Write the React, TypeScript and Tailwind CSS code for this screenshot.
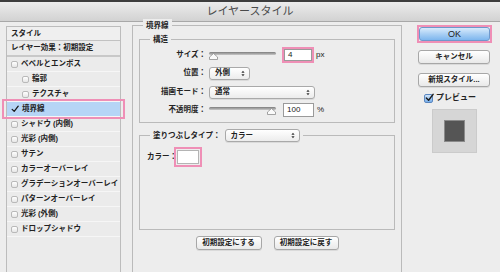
import type { ReactNode } from 'react';

const effects: { label: string; indent?: boolean; checked?: boolean }[] = [
  { label: 'ベベルとエンボス' },
  { label: '輪郭', indent: true },
  { label: 'テクスチャ', indent: true },
  { label: '境界線', checked: true },
  { label: 'シャドウ (内側)' },
  { label: '光彩 (内側)' },
  { label: 'サテン' },
  { label: 'カラーオーバーレイ' },
  { label: 'グラデーションオーバーレイ' },
  { label: 'パターンオーバーレイ' },
  { label: '光彩 (外側)' },
  { label: 'ドロップシャドウ' },
];

function Check({ className }: { className?: string }) {
  return (
    <svg viewBox="0 0 10 10" className={className}>
      <path d="M1.5 5.5 L4 8 L9 1.5" fill="none" stroke="#1a1a1a" strokeWidth="1.6" strokeLinecap="round" strokeLinejoin="round" />
    </svg>
  );
}

function Arrows() {
  return (
    <svg viewBox="0 0 5 8" className="h-[7px] w-[4px]">
      <path d="M2.5 0.5 L4.5 3 H0.5 Z M2.5 7.5 L4.5 5 H0.5 Z" fill="#333" />
    </svg>
  );
}

function Popup({ value, width }: { value: string; width: string }) {
  return (
    <div
      className={`${width} flex h-[13px] items-center justify-between rounded-[3px] border border-[#a9a9a9] bg-gradient-to-b from-white to-[#ececec] pl-[5px] pr-[4px] shadow-[0_1px_0_rgba(0,0,0,0.08)]`}
    >
      <span>{value}</span>
      <Arrows />
    </div>
  );
}

function Slider({ thumb }: { thumb: 'left' | 'right' }) {
  return (
    <div className={`relative flex h-[10px] w-[67px] flex-col ${thumb === 'left' ? 'items-start' : 'items-end'}`}>
      <div className="mt-[2px] h-[3px] w-full rounded-full bg-gradient-to-b from-[#7d7d7d] to-[#c9c9c9]" />
      <svg viewBox="0 0 9 7" className="-mt-[2px] h-[7px] w-[9px]">
        <path d="M4.5 0.5 L8.5 4 V6.5 H0.5 V4 Z" fill="#fafafa" stroke="#8e8e8e" strokeWidth="0.8" />
      </svg>
    </div>
  );
}

function Group({ label, className, children }: { label: ReactNode; className: string; children: ReactNode }) {
  return (
    <div className={`relative border border-[#bababa] ${className}`}>
      <div className="absolute -top-[7px] left-[10px] flex h-[13px] items-center bg-[#ededed] px-[3px]">{label}</div>
      {children}
    </div>
  );
}

function MacButton({ children, width }: { children: ReactNode; width: string }) {
  return (
    <div
      className={`${width} flex h-[14px] items-center justify-center rounded-[3px] border border-[#a7a7a7] bg-gradient-to-b from-white to-[#e9e9e9] shadow-[0_1px_0_rgba(0,0,0,0.08)]`}
    >
      {children}
    </div>
  );
}

function Row({ label, children, className }: { label: string; children: ReactNode; className: string }) {
  return (
    <div className={`flex items-center ${className}`}>
      <span className="w-[66px] whitespace-nowrap text-right">{label}</span>
      <div className="ml-[3px] flex items-center">{children}</div>
    </div>
  );
}

export default function App() {
  return (
    <div className="h-[272px] w-[500px] overflow-hidden bg-[#ededed] font-['Liberation_Sans','Noto_Sans_CJK_JP',sans-serif] text-[7.5px] font-bold leading-none text-[#222]">
      <div className="flex h-[22px] items-center justify-center border-t-2 border-b border-t-[#3d3d3d] border-b-[#a8a8a8] bg-gradient-to-b from-[#ececec] to-[#d2d2d2] pb-[1px] text-[11px] font-normal text-[#4a4a4a]">
        レイヤースタイル
      </div>

      <div className="flex h-[250px] items-start">
        {/* effect list */}
        <div className="mt-[4px] ml-[6px] h-[260px] w-[115px] border border-[#bcbcbc] bg-[#ebebeb]">
          <div className="flex h-[14px] items-center border-b border-[#c2c2c2] bg-[#efefef] pl-[4px]">スタイル</div>
          <div className="flex h-[16px] items-center border-b-2 border-[#c8c8c8] pl-[4px]">レイヤー効果：初期設定</div>
          {effects.map((e) => (
            <div
              key={e.label}
              className={`relative flex h-[15px] items-center border-b border-[#f6f6f6] ${e.indent ? 'pl-[15px]' : 'pl-[4px]'} ${e.checked ? 'bg-[#b6d5f6]' : ''}`}
            >
              {e.checked ? (
                <Check className="h-[8px] w-[8px]" />
              ) : (
                <span className="h-[7px] w-[7px] rounded-[2px] border border-[#b9b9b9] bg-gradient-to-b from-white to-[#e6e6e6]" />
              )}
              <span className="ml-[3px] whitespace-nowrap">{e.label}</span>
              {e.checked && (
                <div className="absolute -top-[3px] -right-[5px] -bottom-[3px] -left-[5px] border-2 border-[#ef8fb6]" />
              )}
            </div>
          ))}
        </div>

        {/* stroke settings */}
        <Group label="境界線" className="mt-[3px] ml-[11px] h-[260px] w-[270px] px-[6px] pt-[13px]">
          <Group label="構造" className="flex flex-col pt-[7px] pb-[5px]">
            <Row label="サイズ：" className="h-[16px]">
              <Slider thumb="left" />
              <div className="ml-[6px] flex h-[16px] w-[32px] items-center border-2 border-[#ef8fb6]">
                <div className="flex h-full w-full items-center border border-[#9a9a9a] bg-white pl-[3px] text-[8px] font-normal">4</div>
              </div>
              <span className="ml-[2px] text-[8px] font-normal">px</span>
            </Row>
            <Row label="位置：" className="mt-[4px] h-[12px]">
              <Popup value="外側" width="w-[41px]" />
            </Row>
            <Row label="描画モード：" className="mt-[7px] h-[12px]">
              <Popup value="通常" width="w-[106px]" />
            </Row>
            <Row label="不透明度：" className="mt-[5px] h-[14px]">
              <Slider thumb="right" />
              <div className="ml-[7px] flex h-[14px] w-[31px] items-center border border-[#9a9a9a] bg-white pl-[3px] text-[8px] font-normal">
                100
              </div>
              <span className="ml-[3px] text-[8px] font-normal">%</span>
            </Row>
          </Group>

          <Group
            label={
              <>
                <span>塗りつぶしタイプ：</span>
                <div className="ml-[4px]">
                  <Popup value="カラー" width="w-[75px]" />
                </div>
              </>
            }
            className="mt-[12px] h-[95px] pt-[11px] pl-[7px]"
          >
            <div className="flex items-center">
              <span className="w-[27px] whitespace-nowrap">カラー：</span>
              <div className="h-[20px] w-[28px] border-2 border-[#ef8fb6] p-[1px]">
                <div className="h-full w-full border border-[#b4b4b4] bg-white" />
              </div>
            </div>
          </Group>

          <div className="mt-[6px] flex justify-center gap-[12px]">
            <MacButton width="w-[66px]">初期設定にする</MacButton>
            <MacButton width="w-[65px]">初期設定に戻す</MacButton>
          </div>
        </Group>

        {/* buttons + preview */}
        <div className="mt-[3px] ml-[15px] flex w-[75px] flex-col items-start">
          <div className="h-[18px] w-[75px] border-2 border-[#ef8fb6]">
            <div className="flex h-full w-full items-center justify-center rounded-[3px] border border-[#6f98cc] bg-gradient-to-b from-[#d9ebfc] via-[#a9cff4] to-[#7db6ee] text-[9px] font-normal">
              OK
            </div>
          </div>
          <div className="mt-[7px] ml-[1px]">
            <MacButton width="w-[72px]">キャンセル</MacButton>
          </div>
          <div className="mt-[9px] ml-[1px]">
            <MacButton width="w-[72px]">新規スタイル...</MacButton>
          </div>
          <div className="mt-[6px] ml-[7px] flex h-[10px] items-center">
            <div className="relative h-[9px] w-[9px] rounded-[2px] border border-[#5a86bf] bg-gradient-to-b from-[#cfe4fa] to-[#77aee9]">
              <Check className="absolute -top-[2px] left-0 h-[9px] w-[9px]" />
            </div>
            <span className="ml-[3px] text-[8px]">プレビュー</span>
          </div>
          <div className="mt-[6px] ml-[15px] flex h-[44px] w-[45px] items-center justify-center border border-[#cbcbcb] bg-[#d6d6d6]">
            <div className="h-[22px] w-[21px] border border-[#8a8a8a] bg-[#555555]" />
          </div>
        </div>
      </div>
    </div>
  );
}
